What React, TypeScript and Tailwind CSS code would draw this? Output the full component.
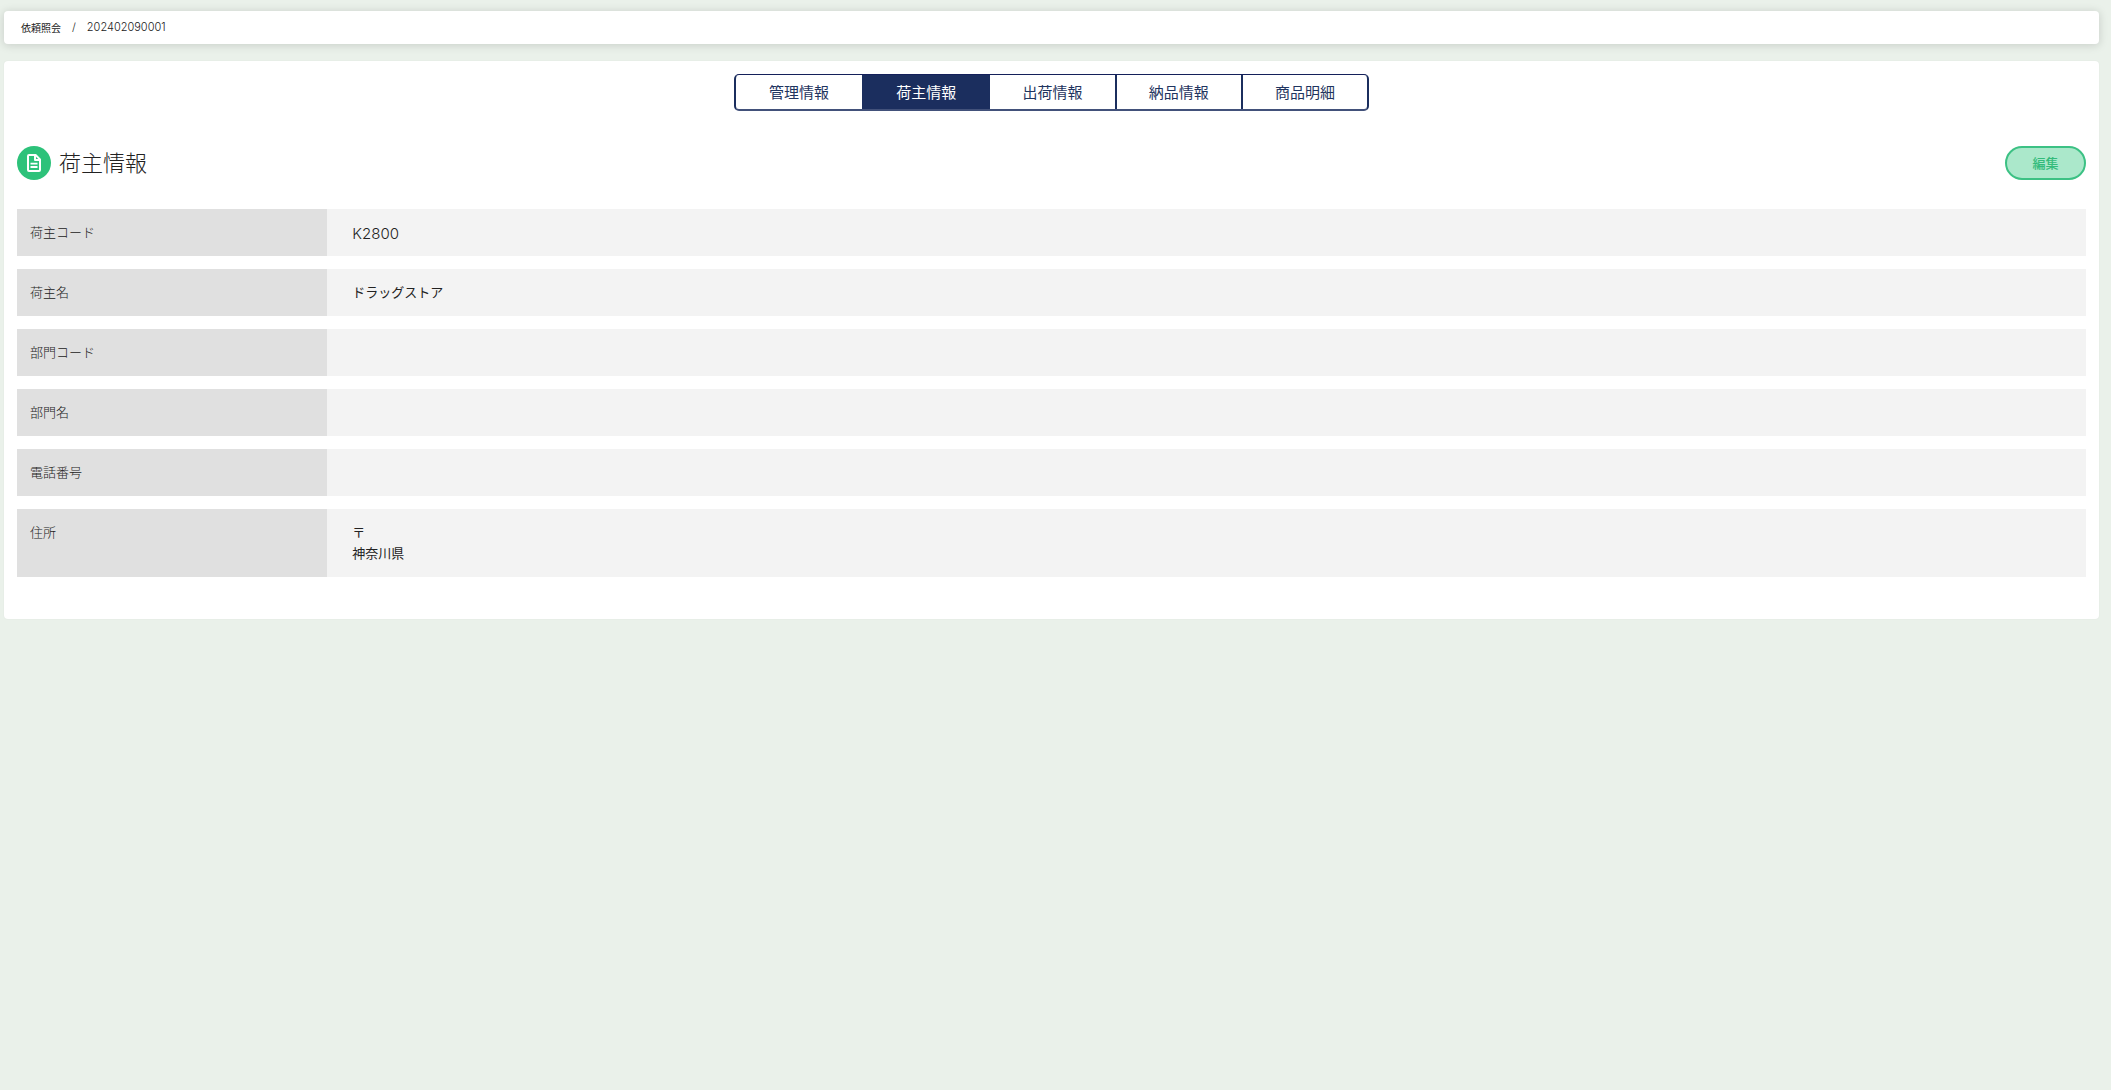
const TABS = ["管理情報", "荷主情報", "出荷情報", "納品情報", "商品明細"];

type Row = { label: string; lines: string[]; latin?: boolean };

const ROWS: Row[] = [
  { label: "荷主コード", lines: ["K2800"], latin: true },
  { label: "荷主名", lines: ["ドラッグストア"] },
  { label: "部門コード", lines: [] },
  { label: "部門名", lines: [] },
  { label: "電話番号", lines: [] },
  { label: "住所", lines: ["〒", "神奈川県"] },
];

function DocumentIcon() {
  return (
    <svg viewBox="0 0 14 18" className="h-[18px] w-[14px]" fill="none" stroke="white" strokeWidth="2" strokeLinejoin="round" aria-hidden="true">
      <path d="M2 1H8.6L13 5.4V16a1 1 0 0 1-1 1H2a1 1 0 0 1-1-1V2a1 1 0 0 1 1-1Z" />
      <path d="M8 1.4V6h4.6" />
      <path d="M3.5 9.7h7M3.5 13h7" strokeWidth="1.8" />
    </svg>
  );
}

function Breadcrumb() {
  return (
    <nav
      aria-label="breadcrumb"
      className="rounded-[4px] bg-white px-[17px] py-2 shadow-[0_1px_8px_1px_rgba(0,0,0,0.13)]"
    >
      <ol className="flex h-[17px] items-center text-[10px] text-[#222222]">
        <li>
          <a href="#">依頼照会</a>
        </li>
        <li aria-hidden="true" className="px-[11px] font-['Inter'] text-[11px] font-light">
          /
        </li>
        <li aria-current="page" className="font-['Inter'] text-[11px] font-light">
          202402090001
        </li>
      </ol>
    </nav>
  );
}

function Tabs() {
  return (
    <div
      role="tablist"
      className="mx-auto grid w-[635px] grid-cols-5 overflow-hidden rounded-[5px] border-x-2 border-t border-b-2 border-x-[#1b2e5e] border-t-[#14205a] border-b-[#42517a]"
    >
      {TABS.map((tab, i) => (
        <button
          key={tab}
          type="button"
          role="tab"
          aria-selected={i === 1}
          className="h-[34px] border-l-2 border-[#1b2e5e] text-[15px] text-[#1f3560] first:border-l-0 aria-selected:bg-[#1b2e5e] aria-selected:text-white"
        >
          {tab}
        </button>
      ))}
    </div>
  );
}

export default function App() {
  return (
    <div className="min-h-screen bg-[#eaf1ea] pt-[11px] pr-3 pl-1 font-['Noto_Sans_CJK_JP',sans-serif] text-[#222222]">
      <Breadcrumb />
      <main className="mt-[17px] rounded-[4px] bg-white px-[13px] pt-[13px] pb-[42px] shadow-[0_0_2px_rgba(0,0,0,0.06)]">
        <Tabs />
        <header className="mt-[35px] flex items-center justify-between">
          <div className="flex items-start gap-2">
            <span className="flex size-[34px] items-center justify-center rounded-full bg-[#2dc27a]">
              <DocumentIcon />
            </span>
            <h1 className="text-[22px] leading-[30px] font-light">荷主情報</h1>
          </div>
          <button
            type="button"
            className="h-[34px] w-[81px] rounded-full border-2 border-[#3cc184] bg-[#abe8cb] text-[13px] font-medium text-[#34bb7b]"
          >
            編集
          </button>
        </header>
        <dl className="mt-[29px] flex flex-col gap-[13px] text-[13px] leading-[21px]">
          {ROWS.map((row) => (
            <div key={row.label} className="flex bg-[#f3f3f3]">
              <dt className="w-[15%] bg-[#e0e0e0] px-[13px] pt-3 pb-[14px] font-light text-[#222222]">{row.label}</dt>
              <dd className="flex-1 px-[25px] pt-3 pb-[14px]">
                {row.lines.map((line) => (
                  <p key={line} className={row.latin ? "-mb-1 font-['Inter'] text-[15px] leading-[25px] font-light" : ""}>
                    {line}
                  </p>
                ))}
              </dd>
            </div>
          ))}
        </dl>
      </main>
    </div>
  );
}
